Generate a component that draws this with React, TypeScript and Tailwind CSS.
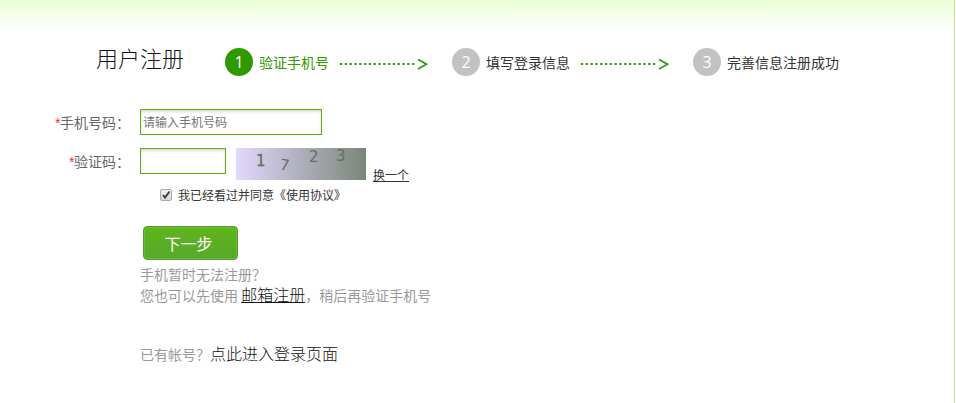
import type { ReactNode } from "react";

const steps = ["验证手机号", "填写登录信息", "完善信息注册成功"];

function DottedArrow() {
  return (
    <svg
      className="ml-2.5 mr-6 mt-1 shrink-0"
      width="89"
      height="12"
      viewBox="0 0 89 12"
      fill="none"
      stroke="#2f9a00"
      aria-hidden="true"
    >
      <path d="M1 6H77" strokeWidth="2" strokeDasharray="2.2 2.6" />
      <path d="M79 1.5L87.5 6.2L79 11" strokeWidth="1.7" />
    </svg>
  );
}

function Steps() {
  return (
    <ol className="flex">
      {steps.map((step, i) => (
        <li key={step} className="flex items-center">
          <span
            className={
              i === 0
                ? "flex size-7 items-center justify-center rounded-full bg-[#2f9a00] font-['Open_Sans'] text-base text-white"
                : "flex size-7 items-center justify-center rounded-full bg-[#c2c2c2] font-['Open_Sans'] text-base text-white"
            }
          >
            {i + 1}
          </span>
          <span
            className={
              i === 0
                ? "ml-1.5 whitespace-nowrap text-sm text-[#2f9a00]"
                : "ml-1.5 whitespace-nowrap text-sm text-[#333]"
            }
          >
            {step}
          </span>
          {i < steps.length - 1 && <DottedArrow />}
        </li>
      ))}
    </ol>
  );
}

function Label({ htmlFor, children }: { htmlFor: string; children: ReactNode }) {
  return (
    <label
      htmlFor={htmlFor}
      className="w-[130px] shrink-0 pr-2.5 pt-[3px] text-right text-sm leading-5 text-[#666]"
    >
      <span className="font-['Liberation_Sans'] italic text-[#ff2a2a]">*</span>
      {children}：
    </label>
  );
}

function Captcha() {
  return (
    <svg
      className="ml-2.5 shrink-0"
      width="130"
      height="32"
      viewBox="0 0 130 32"
      role="img"
      aria-label="验证码"
    >
      <defs>
        <linearGradient id="captcha-bg">
          <stop offset="0" stopColor="#e3d8ff" />
          <stop offset="1" stopColor="#7a8678" />
        </linearGradient>
      </defs>
      <rect width="130" height="32" fill="url(#captcha-bg)" />
      <g fill="#5f7062" fontFamily="DejaVu Sans" fontSize="15">
        <text x="20" y="18" stroke="#5f7062" strokeWidth="0.3">1</text>
        <text x="44" y="22" transform="rotate(8 48 17)">7</text>
        <text x="73" y="14">2</text>
        <text x="100" y="13">3</text>
      </g>
    </svg>
  );
}

export default function App() {
  return (
    <div className="min-h-screen bg-white pr-px font-['Noto_Sans_CJK_SC',sans-serif]">
      <main className="min-h-screen border-r border-[#c3e08a] bg-linear-to-b from-[#e9ffd5] to-white to-[32px]">
        <header className="flex pl-24 pt-12">
          <h1 className="mr-[41px] whitespace-nowrap text-[22px] leading-[18px] font-light text-[#111]">
            用户注册
          </h1>
          <Steps />
        </header>

        <form className="pl-2.5 pt-[33px]" onSubmit={(e) => e.preventDefault()}>
          {/* Phone number */}
          <div className="flex">
            <Label htmlFor="phone">手机号码</Label>
            <input
              id="phone"
              type="tel"
              placeholder="请输入手机号码"
              className="h-[26px] w-[182px] border border-[#5fae0b] bg-white px-0.5 pb-0.5 text-xs shadow-[inset_0_2px_3px_#ddd] outline-none placeholder:text-[#757575]"
            />
          </div>

          {/* Captcha */}
          <div className="mt-[13px] flex">
            <Label htmlFor="code">验证码</Label>
            <input
              id="code"
              type="text"
              className="h-[26px] w-[86px] border border-[#5fae0b] bg-white px-0.5 text-xs shadow-[inset_0_2px_3px_#ddd] outline-none"
            />
            <Captcha />
            <a
              href="#captcha"
              className="ml-[7px] self-end text-xs leading-[10px] text-[#333] underline"
            >
              换一个
            </a>
          </div>

          <div className="pl-[130px]">
            <label className="mt-[5px] flex items-center gap-1.5 pl-5 text-xs leading-5 text-[#333]">
              <span className="relative flex size-3">
                <input
                  type="checkbox"
                  defaultChecked
                  className="peer size-3 appearance-none rounded-xs border border-[#aaa] bg-linear-to-b from-[#f0f0f0] to-[#dcdcdc]"
                />
                <svg
                  className="pointer-events-none absolute inset-0 hidden peer-checked:block"
                  viewBox="0 0 12 12"
                  fill="none"
                  stroke="#404040"
                  strokeWidth="2"
                >
                  <path d="M3 6L5 8.5L9.5 2.5" />
                </svg>
              </span>
              我已经看过并同意《使用协议》
            </label>

            <button
              type="submit"
              className="ml-[3px] mt-[21px] block h-[34px] w-[95px] rounded border border-[#559f2c] bg-linear-to-b from-[#5fb51b] to-[#58a82a] pr-1 text-base leading-6 text-white shadow-[inset_0_0_0_1px_#6fb93a]"
            >
              下一步
            </button>

            <p className="mt-1 text-sm leading-5 text-[#999]">
              手机暂时无法注册？
              <br />
              您也可以先使用{" "}
              <a href="#email" className="text-base leading-5 font-light text-[#111] underline">
                邮箱注册
              </a>
              ，稍后再验证手机号
            </p>
            <p className="mt-[38px] text-sm leading-5 text-[#999]">
              已有帐号？
              <a href="#login" className="text-base leading-5 font-light text-[#111]">
                点此进入登录页面
              </a>
            </p>
          </div>
        </form>
      </main>
    </div>
  );
}
